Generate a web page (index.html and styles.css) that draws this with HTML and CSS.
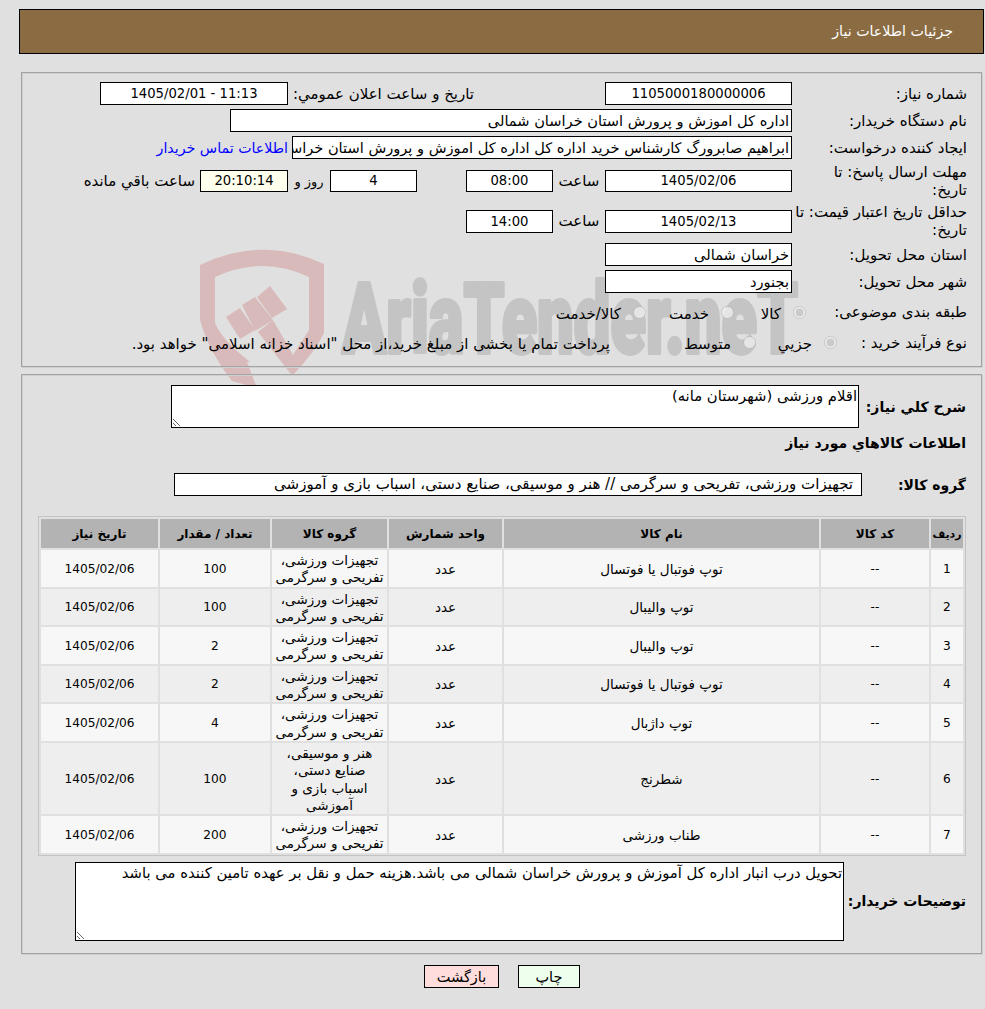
FILE: index.html
```html
<!DOCTYPE html>
<html lang="fa" dir="rtl">
<head>
<meta charset="utf-8">
<title>جزئیات اطلاعات نیاز</title>
<link rel="stylesheet" href="styles.css">
</head>
<body>
<svg class="watermark" viewBox="190 240 620 180" width="620" height="180" xmlns="http://www.w3.org/2000/svg">
  <g class="wm-red">
    <path fill-rule="evenodd" d="M200 265 Q262 235 324 264 V333 Q315 352 293 375 L293 355 L309 330 V277 Q262 255 215 277 V323 Q222 340 250 362 L247 362 L257 388 L232 381 Q208 350 200 320 Z"/>
    <polygon points="226,317 240,308 255,330 240,339"/>
    <polygon points="242,305 255,297 273,320 255,331"/>
    <polygon points="257,297 270,286 287,309 272,318"/>
    <polygon points="258,332 273,320 293,355 293,375 290,373"/>
  </g>
  <text class="wm-text" x="342" y="353" textLength="456" lengthAdjust="spacingAndGlyphs">AriaTender.neT</text>
</svg>

<header class="title-bar">جزئیات اطلاعات نیاز</header>

<section class="panel panel-info">
  <div class="row">
    <div class="label">شماره نیاز:</div>
    <div class="box box-date">1105000180000006</div>
    <div class="label-public">تاریخ و ساعت اعلان عمومي:</div>
    <div class="box box-public">11:13 - 1405/02/01</div>
  </div>
  <div class="row">
    <div class="label">نام دستگاه خریدار:</div>
    <div class="box box-buyer left-text">اداره کل اموزش و پرورش استان خراسان شمالی</div>
  </div>
  <div class="row">
    <div class="label">ایجاد کننده درخواست:</div>
    <div class="box box-creator left-text">ابراهیم صابرورگ کارشناس خرید اداره کل اداره کل اموزش و پرورش استان خراسان شمالی</div>
    <a class="contact" href="#">اطلاعات تماس خریدار</a>
  </div>
  <div class="row row-tall">
    <div class="label">مهلت ارسال پاسخ: تا<br>تاریخ:</div>
    <div class="box box-date box-short">1405/02/06</div>
    <div class="unit">ساعت</div>
    <div class="box box-small box-short">08:00</div>
    <div class="spacer"></div>
    <div class="box box-small box-short">4</div>
    <div class="unit-day">روز و</div>
    <div class="box box-timer box-short">20:10:14</div>
    <div class="remaining">ساعت باقي مانده</div>
  </div>
  <div class="row row-tall">
    <div class="label">حداقل تاریخ اعتبار قیمت: تا تاریخ:</div>
    <div class="box box-date">1405/02/13</div>
    <div class="unit">ساعت</div>
    <div class="box box-small">14:00</div>
  </div>
  <div class="row">
    <div class="label">استان محل تحویل:</div>
    <div class="box box-date left-text">خراسان شمالی</div>
  </div>
  <div class="row">
    <div class="label">شهر محل تحویل:</div>
    <div class="box box-date left-text">بجنورد</div>
  </div>
  <div class="row row-radio">
    <div class="label label-cat">طبقه بندی موضوعی:</div>
    <label class="option opt-a"><input type="radio" name="cat" disabled checked><span>کالا</span></label>
    <label class="option opt-b"><input type="radio" name="cat" disabled><span>خدمت</span></label>
    <label class="option"><input type="radio" name="cat" disabled><span>کالا/خدمت</span></label>
  </div>
  <div class="row">
    <div class="label label-proc">نوع فرآیند خرید :</div>
    <label class="option opt-c"><input type="radio" name="proc" disabled checked><span>جزيي</span></label>
    <label class="option opt-d"><input type="radio" name="proc" disabled><span>متوسط</span></label>
    <div class="note">پرداخت تمام یا بخشی از مبلغ خرید،از محل "اسناد خزانه اسلامی" خواهد بود.</div>
  </div>
</section>

<section class="panel panel-items">
  <div class="line">
    <div class="strong label-desc">شرح كلي نياز:</div>
    <textarea class="area area-desc" readonly>اقلام ورزشی (شهرستان مانه)</textarea>
  </div>
  <div class="strong heading">اطلاعات كالاهاي مورد نياز</div>
  <div class="line line-group">
    <div class="strong label-group">گروه کالا:</div>
    <div class="box box-group">تجهیزات ورزشی، تفریحی و سرگرمی // هنر و موسیقی، صنایع دستی، اسباب بازی و آموزشی</div>
  </div>
  <table class="items">
    <colgroup>
      <col class="c-row"><col class="c-code"><col class="c-name"><col class="c-unit"><col class="c-grp"><col class="c-qty"><col class="c-date">
    </colgroup>
    <thead>
      <tr><th class="th-row">ردیف</th><th>کد کالا</th><th>نام کالا</th><th>واحد شمارش</th><th>گروه کالا</th><th>تعداد / مقدار</th><th>تاریخ نیاز</th></tr>
    </thead>
    <tbody>
      <tr><td class="num">1</td><td class="num">--</td><td>توپ فوتبال یا فوتسال</td><td>عدد</td><td>تجهیزات ورزشی،<br>تفریحی و سرگرمی</td><td class="num">100</td><td class="num">1405/02/06</td></tr>
      <tr><td class="num">2</td><td class="num">--</td><td>توپ والیبال</td><td>عدد</td><td>تجهیزات ورزشی،<br>تفریحی و سرگرمی</td><td class="num">100</td><td class="num">1405/02/06</td></tr>
      <tr><td class="num">3</td><td class="num">--</td><td>توپ والیبال</td><td>عدد</td><td>تجهیزات ورزشی،<br>تفریحی و سرگرمی</td><td class="num">2</td><td class="num">1405/02/06</td></tr>
      <tr><td class="num">4</td><td class="num">--</td><td>توپ فوتبال یا فوتسال</td><td>عدد</td><td>تجهیزات ورزشی،<br>تفریحی و سرگرمی</td><td class="num">2</td><td class="num">1405/02/06</td></tr>
      <tr><td class="num">5</td><td class="num">--</td><td>توپ داژبال</td><td>عدد</td><td>تجهیزات ورزشی،<br>تفریحی و سرگرمی</td><td class="num">4</td><td class="num">1405/02/06</td></tr>
      <tr><td class="num">6</td><td class="num">--</td><td>شطرنج</td><td>عدد</td><td>هنر و موسیقی،<br>صنایع دستی،<br>اسباب بازی و<br>آموزشی</td><td class="num">100</td><td class="num">1405/02/06</td></tr>
      <tr><td class="num">7</td><td class="num">--</td><td>طناب ورزشی</td><td>عدد</td><td>تجهیزات ورزشی،<br>تفریحی و سرگرمی</td><td class="num">200</td><td class="num">1405/02/06</td></tr>
    </tbody>
  </table>
  <div class="line line-note">
    <div class="strong label-note">توضیحات خریدار:</div>
    <textarea class="area area-note" readonly>تحویل درب انبار اداره کل آموزش و پرورش خراسان شمالی می باشد.هزینه حمل و نقل بر عهده تامین کننده می باشد</textarea>
  </div>
</section>

<div class="actions">
  <button class="btn btn-print" type="button">چاپ</button>
  <button class="btn btn-back" type="button">بازگشت</button>
</div>
</body>
</html>
```
FILE: styles.css
```css
html { background: #e0e0e0; }
body {
  margin: 0;
  width: 985px;
  height: 1009px;
  overflow: hidden;
  position: relative;
  font-family: "DejaVu Sans", sans-serif;
  font-size: 15px;
  color: #000;
}
.watermark { position: absolute; left: 190px; top: 240px; z-index: -1; direction: ltr; }
.wm-red { fill: #d9babb; }
.wm-text {
  font-family: Roboto, sans-serif;
  font-weight: 900;
  font-size: 98px;
  fill: #c4c4c4;
  stroke: #c4c4c4;
  stroke-width: 4px;
  stroke-linejoin: round;
}

.title-bar {
  box-sizing: border-box;
  height: 45px;
  margin: 9px 1px 18px 19px;
  padding-right: 30px;
  background: #8b6c42;
  border: 1px solid #000;
  color: #fff;
  font-size: 14.2px;
  line-height: 43px;
}

.panel {
  box-sizing: border-box;
  width: 961px;
  margin-right: 3px;
  border: 1px solid #a3a3a3;
  box-shadow: 1px 1px 0 #cfcfcf, inset 1px 1px 0 #cfcfcf;
}
.panel-info {
  height: 295px;
  padding: 9px 14px 0 0;
  display: flex;
  flex-direction: column;
  gap: 4px;
}
.row { display: flex; align-items: center; height: 23px; flex: none; }
.row-tall { height: 36px; }
.row-radio { height: 30px; }
.label { width: 175px; flex: none; line-height: 18px; }
.label-cat { width: 161px; }
.label-proc { width: 130px; }

.box {
  box-sizing: border-box;
  height: 23px;
  flex: none;
  background: #fff;
  border: 1px solid #000;
  font-size: 13.2px;
  line-height: 21px;
  text-align: center;
  white-space: nowrap;
  overflow: hidden;
  direction: rtl;
}
.box-short { height: 22px; line-height: 20px; }
.left-text { text-align: right; padding-right: 2px; font-size: 14.6px; }
.box-date { width: 187px; }
.box-public { width: 188px; }
.box-buyer { width: 562px; }
.box-creator { width: 500px; }
.box-small { width: 87px; }
.box-timer { width: 88px; background: #ffffee; }
.box-group { width: 688px; text-align: right; padding-right: 8px; font-size: 15px; }

.label-public { box-sizing: border-box; width: 317px; padding-right: 131px; white-space: nowrap; }
.contact { margin-right: 4px; color: #0000ff; text-decoration: none; white-space: nowrap; font-size: 14.2px; }
.unit { width: 52px; flex: none; text-align: center; }
.spacer { width: 49px; flex: none; }
.unit-day { width: 42px; flex: none; text-align: center; font-size: 13px; }
.remaining { margin-right: 5px; white-space: nowrap; }

.option { display: flex; align-items: center; flex: none; gap: 12px; }
.option input { margin: 0; width: 13px; height: 13px; flex: none; }
.option span { margin-top: 3px; }
.opt-a { width: 72px; }
.opt-b { width: 88px; }
.opt-c { width: 81px; }
.opt-d { width: 146px; }
.note { white-space: nowrap; margin-top: 3px; }

.panel-items {
  margin-top: 7px;
  height: 580px;
  padding: 10px 15px 0 16px;
}
.strong { font-weight: 700; font-size: 14px; }
.line { display: flex; align-items: center; }
.label-desc { width: 107px; flex: none; }
.label-group { width: 104px; flex: none; }
.label-note { width: 122px; flex: none; white-space: nowrap; }
.heading { height: 20px; line-height: 20px; margin-top: 5px; }
.line-group { margin-top: 20px; }
.line-note { margin-top: 6px; }

.area {
  display: block;
  box-sizing: border-box;
  flex: none;
  margin: 0;
  padding: 1px;
  background: #fff;
  border: 1px solid #000;
  border-radius: 0;
  outline: none;
  font-family: inherit;
  font-size: 14.8px;
  color: #000;
}
.area-desc { width: 688px; height: 43px; }
.area-note { width: 769px; height: 79px; }

.items {
  box-sizing: border-box;
  width: 928px;
  margin-top: 20px;
  table-layout: fixed;
  border-collapse: separate;
  border-spacing: 2px;
  border: 1px solid #c4c4c4;
  font-size: 13.5px;
}
.c-row { width: 32px; }
.c-code { width: 108px; }
.c-name { width: 315px; }
.c-unit { width: 113px; }
.c-grp { width: 115px; }
.c-qty { width: 110px; }
.c-date { width: 117px; }
.items th {
  height: 28px;
  padding: 1px 0 0;
  background: #b3b3b3;
  font-size: 12px;
  font-weight: 700;
}
.items .th-row { font-size: 11px; }
.items td {
  padding: 2px 0 0;
  height: 34.5px;
  line-height: 17.3px;
  text-align: center;
  white-space: nowrap;
}
.items .num { font-size: 12.2px; }
.items tbody tr:nth-child(odd) td { background: #f7f7f7; }
.items tbody tr:nth-child(even) td { background: #eeeeee; }

.actions {
  display: flex;
  gap: 19px;
  margin-top: 11px;
  padding-right: 405px;
}
.btn {
  box-sizing: border-box;
  height: 23px;
  padding: 0;
  border: 1px solid #000;
  font-family: inherit;
  font-size: 14.5px;
  color: #000;
}
.btn-print { width: 62px; background: #eeffee; }
.btn-back { width: 75px; background: #ffdddd; }
```
